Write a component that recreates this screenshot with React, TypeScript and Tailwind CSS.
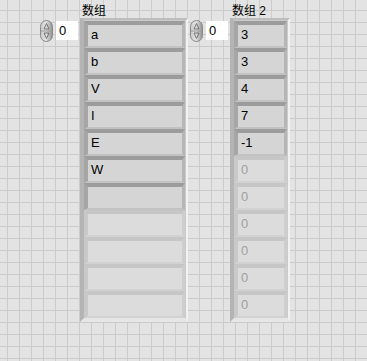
const font = { fontFamily: '"Liberation Sans", "Noto Sans CJK SC", sans-serif' };

function Spinner() {
  return (
    <svg width="13" height="22" viewBox="0 0 13 22" className="block">
      <defs>
        <linearGradient id="sp" x1="0" x2="1" y1="0" y2="0">
          <stop offset="0" stopColor="#c8c8c8" />
          <stop offset="0.45" stopColor="#e4e4e4" />
          <stop offset="1" stopColor="#8e8e8e" />
        </linearGradient>
      </defs>
      <rect x="0.5" y="0.5" width="12" height="21" rx="6" fill="url(#sp)" stroke="#8a8a8a" />
      <line x1="1" y1="11" x2="12" y2="11" stroke="#9a9a9a" />
      <path d="M6.5 3.5 L9 9 L4 9 Z" fill="none" stroke="#666" strokeWidth="0.9" />
      <path d="M6.5 18.5 L9 13 L4 13 Z" fill="none" stroke="#666" strokeWidth="0.9" />
    </svg>
  );
}

function IndexControl() {
  return (
    <div className="flex items-start mt-[19px]">
      <Spinner />
      <div className="ml-[3px] mt-[1px] w-[22px] h-[19px] bg-white text-[13px] leading-[19px] pl-[3px] text-black" style={font}>
        0
      </div>
    </div>
  );
}

function Element({ text, on }: { text: string; on: boolean }) {
  return (
    <div
      className={
        on
          ? "h-[27px] border-t-[4px] border-l-[4px] border-r-[3px] border-b-[2px] border-t-[#9c9c9c] border-l-[#a6a6a6] border-r-[#b6b6b6] border-b-[#c2c2c2] bg-[#d5d5d5] text-[13px] leading-[20px] pl-[3px] text-black"
          : "h-[27px] border-t-[4px] border-l-[4px] border-r-[3px] border-b-[2px] border-t-[#c6c6c6] border-l-[#c9c9c9] border-r-[#cecece] border-b-[#d2d2d2] bg-[#dcdcdc] text-[13px] leading-[20px] pl-[3px] text-[#a0a0a0]"
      }
      style={font}
    >
      {text}
    </div>
  );
}

function ArrayFrame({ label, items, filler, width }: { label: string; items: string[]; filler: string; width: string }) {
  const rows = Array.from({ length: 11 }, (_, i) => i);
  return (
    <div className="flex flex-col">
      <div className="h-[17px] text-[12px] leading-[17px] pl-[2px] pt-[2px] text-black" style={font}>
        {label}
      </div>
      <div className={`${width} border-t-[2px] border-l-[4px] border-r-[2px] border-b-[4px] border-t-[#bdbdbd] border-l-[#b4b4b4] border-r-[#f2f2f2] border-b-[#e6e6e6] bg-[#cacaca] pt-[1px] pr-[1px]`}>
        {rows.map((i) => (
          <Element key={i} text={i < items.length ? items[i] : filler} on={i < items.length} />
        ))}
      </div>
    </div>
  );
}

export default function App() {
  const left = ["a", "b", "V", "I", "E", "W", ""];
  const right = ["3", "3", "4", "7", "-1"];
  return (
    <div className="w-[367px] h-[361px] overflow-hidden bg-[#e3e3e3] bg-[linear-gradient(to_right,#cbcbcb_1px,transparent_1px),linear-gradient(to_bottom,#cbcbcb_1px,transparent_1px)] bg-[length:12px_12px] bg-[position:7px_10px]">
      <div className="flex items-start pl-[40px] pt-[1px]">
        <IndexControl />
        <div className="ml-[2px]">
          <ArrayFrame label="数组" items={left} filler="" width="w-[108px]" />
        </div>
        <div className="ml-[2px]">
          <IndexControl />
        </div>
        <div className="ml-[2px]">
          <ArrayFrame label="数组 2" items={right} filler="0" width="w-[60px]" />
        </div>
      </div>
    </div>
  );
}
